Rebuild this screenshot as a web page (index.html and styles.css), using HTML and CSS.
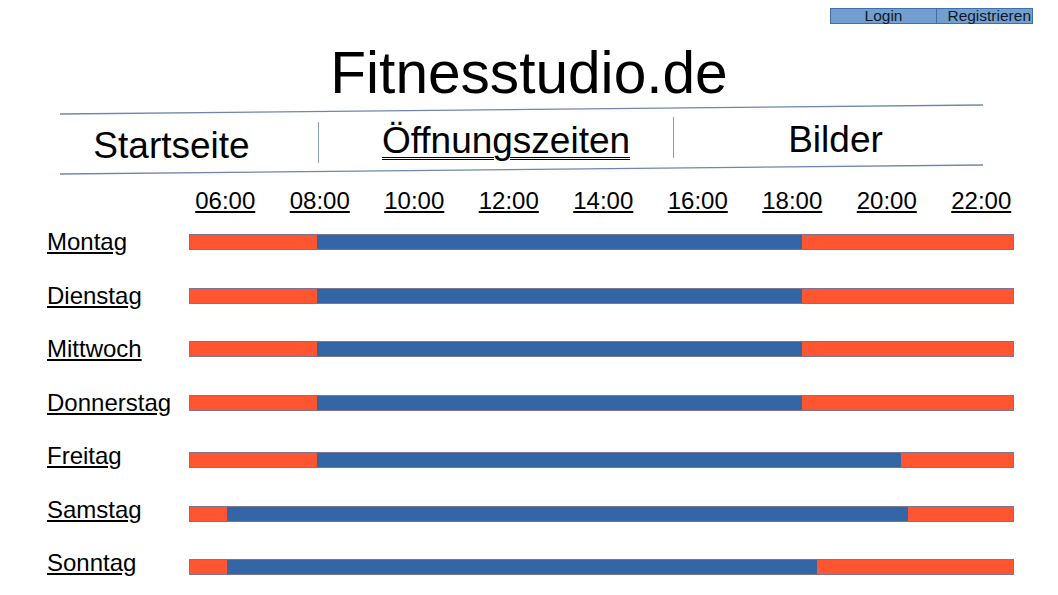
FILE: index.html
```html
<!DOCTYPE html>
<html lang="de">
<head>
<meta charset="utf-8">
<title>Fitnesstudio.de</title>
<link rel="stylesheet" href="styles.css">
</head>
<body>
<div class="page">
  <div class="auth">
    <a class="btn btn-login">Login</a>
    <a class="btn btn-register">Registrieren</a>
  </div>
  <h1 class="title">Fitnesstudio.de</h1>
  <nav class="nav">
    <svg class="nav-lines" width="1058" height="74" viewBox="0 0 1058 74">
      <line x1="60" y1="11" x2="983" y2="2" stroke="#6f87ab" stroke-width="1.3"/>
      <line x1="60" y1="71" x2="983" y2="62" stroke="#6f87ab" stroke-width="1.3"/>
    </svg>
    <a class="nav-item nav-start">Startseite</a>
    <a class="nav-item nav-hours">Öffnungszeiten</a>
    <a class="nav-item nav-pics">Bilder</a>
  </nav>
  <div class="schedule">
    <div class="times">
      <span class="time">06:00</span>
      <span class="time">08:00</span>
      <span class="time">10:00</span>
      <span class="time">12:00</span>
      <span class="time">14:00</span>
      <span class="time">16:00</span>
      <span class="time">18:00</span>
      <span class="time">20:00</span>
      <span class="time">22:00</span>
    </div>
    <div class="rows">
      <div class="row">
        <span class="day">Montag</span>
        <div class="bar"><span class="seg closed" style="width:127px"></span><span class="seg open" style="width:485px"></span><span class="seg closed rest"></span></div>
      </div>
      <div class="row">
        <span class="day">Dienstag</span>
        <div class="bar"><span class="seg closed" style="width:127px"></span><span class="seg open" style="width:485px"></span><span class="seg closed rest"></span></div>
      </div>
      <div class="row">
        <span class="day">Mittwoch</span>
        <div class="bar"><span class="seg closed" style="width:127px"></span><span class="seg open" style="width:485px"></span><span class="seg closed rest"></span></div>
      </div>
      <div class="row">
        <span class="day">Donnerstag</span>
        <div class="bar"><span class="seg closed" style="width:127px"></span><span class="seg open" style="width:485px"></span><span class="seg closed rest"></span></div>
      </div>
      <div class="row row-low">
        <span class="day">Freitag</span>
        <div class="bar"><span class="seg closed" style="width:127px"></span><span class="seg open" style="width:584px"></span><span class="seg closed rest"></span></div>
      </div>
      <div class="row row-low">
        <span class="day">Samstag</span>
        <div class="bar"><span class="seg closed" style="width:37px"></span><span class="seg open" style="width:681px"></span><span class="seg closed rest"></span></div>
      </div>
      <div class="row row-low">
        <span class="day">Sonntag</span>
        <div class="bar"><span class="seg closed" style="width:37px"></span><span class="seg open" style="width:590px"></span><span class="seg closed rest"></span></div>
      </div>
    </div>
  </div>
</div>
</body>
</html>
```

FILE: styles.css
```css
html, body {
  margin: 0;
  padding: 0;
  background: #ffffff;
}

body {
  font-family: "Liberation Sans", Arial, sans-serif;
  color: #000000;
}

.page {
  width: 1058px;
  height: 595px;
  overflow: hidden;
}

/* Login / Register buttons */
.auth {
  display: flex;
  justify-content: flex-end;
  padding-right: 25px;
  margin-top: 8px;
  height: 16px;
}

.btn {
  display: block;
  box-sizing: border-box;
  height: 16px;
  background: #729fcf;
  border: 1px solid #3f6ea8;
  font-size: 15.5px;
  line-height: 14px;
  color: #101828;
  white-space: nowrap;
  overflow: visible;
}

.btn-login {
  width: 107px;
  text-align: center;
}

.btn-register {
  width: 96px;
  border-left: none;
  text-align: right;
  padding-right: 1px;
}

/* Title */
.title {
  margin: 19px 0 0 0;
  font-size: 58.6px;
  line-height: 60px;
  font-weight: normal;
  text-align: center;
}

/* Navigation */
.nav {
  position: relative;
  height: 74px;
  display: flex;
  align-items: flex-start;
  padding-left: 60px;
}

.nav-lines {
  position: absolute;
  left: 0;
  top: 0;
  pointer-events: none;
}

.nav-item {
  display: block;
  box-sizing: border-box;
  font-size: 37px;
  line-height: 41px;
  height: 41px;
  text-align: center;
  white-space: nowrap;
}

.nav-start {
  width: 258px;
  margin-top: 22px;
  padding-right: 35px;
}

.nav-hours {
  width: 355px;
  margin-top: 19px;
  line-height: 37px;
  padding-left: 20px;
  border-left: 1.5px solid #8a9cb8;
  text-decoration: underline double;
  text-decoration-thickness: 1px;
  text-underline-offset: 4px;
}

.nav-pics {
  width: 310px;
  margin-top: 14px;
  padding-top: 2px;
  padding-left: 14px;
  border-left: 1.5px solid #8a9cb8;
}

/* Schedule */
.schedule {
  margin-top: 10px;
}

.times {
  display: flex;
  padding-left: 178px;
  height: 28px;
}

.time {
  width: 94.5px;
  flex: none;
  text-align: center;
  font-size: 24px;
  line-height: 28px;
  text-decoration: underline;
  text-underline-offset: 2px;
}

.rows {
  margin-top: 15px;
  display: flex;
  flex-direction: column;
  gap: 29.5px;
}

.row {
  display: flex;
  align-items: flex-end;
  height: 24px;
  padding-left: 47px;
}

.day {
  width: 142px;
  flex: none;
  font-size: 24px;
  line-height: 24px;
  text-decoration: underline;
  text-underline-offset: 2px;
  white-space: nowrap;
}

.bar {
  display: flex;
  box-sizing: border-box;
  width: 825px;
  height: 16px;
  margin-bottom: 4px;
  border: 1px solid #7c7594;
  flex: none;
}

.row-low .bar {
  margin-bottom: 0;
}

.seg {
  display: block;
  height: 100%;
  flex: none;
}

.seg.rest {
  flex: 1 1 auto;
}

.closed {
  background: #ff5530;
}

.open {
  background: #3465a4;
}
```
